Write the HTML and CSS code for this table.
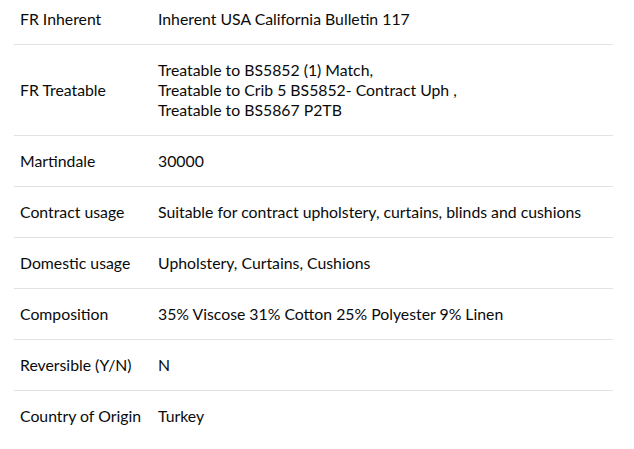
FILE: index.html
```html
<!DOCTYPE html>
<html>
<head>
<meta charset="utf-8">
<link rel="stylesheet" href="styles.css">
</head>
<body>
<table class="specs">
  <tr><td class="label">FR Inherent</td><td class="value">Inherent USA California Bulletin 117</td></tr>
  <tr><td class="label">FR Treatable</td><td class="value">Treatable to BS5852 (1) Match,<br>Treatable to Crib 5 BS5852- Contract Uph ,<br>Treatable to BS5867 P2TB</td></tr>
  <tr><td class="label">Martindale</td><td class="value">30000</td></tr>
  <tr><td class="label">Contract usage</td><td class="value">Suitable for contract upholstery, curtains, blinds and cushions</td></tr>
  <tr><td class="label">Domestic usage</td><td class="value">Upholstery, Curtains, Cushions</td></tr>
  <tr><td class="label">Composition</td><td class="value">35% Viscose 31% Cotton 25% Polyester 9% Linen</td></tr>
  <tr><td class="label">Reversible (Y/N)</td><td class="value">N</td></tr>
  <tr><td class="label">Country of Origin</td><td class="value">Turkey</td></tr>
</table>
</body>
</html>
```
FILE: styles.css
```css
html, body {
  margin: 0;
  padding: 0;
  background: #fff;
}
body {
  font-family: Lato, "Open Sans", sans-serif;
  font-size: 15.8px;
  color: #0a0a0a;
}
.specs {
  border-collapse: collapse;
  width: 599px;
  margin: -6px 0 0 14px;
}
.specs td {
  padding: 15px 6px;
  line-height: 20px;
  vertical-align: middle;
  border-bottom: 1px solid #e2e2e2;
}
.specs tr:last-child td {
  border-bottom: none;
}
.label {
  width: 126px;
  white-space: nowrap;
}
```
